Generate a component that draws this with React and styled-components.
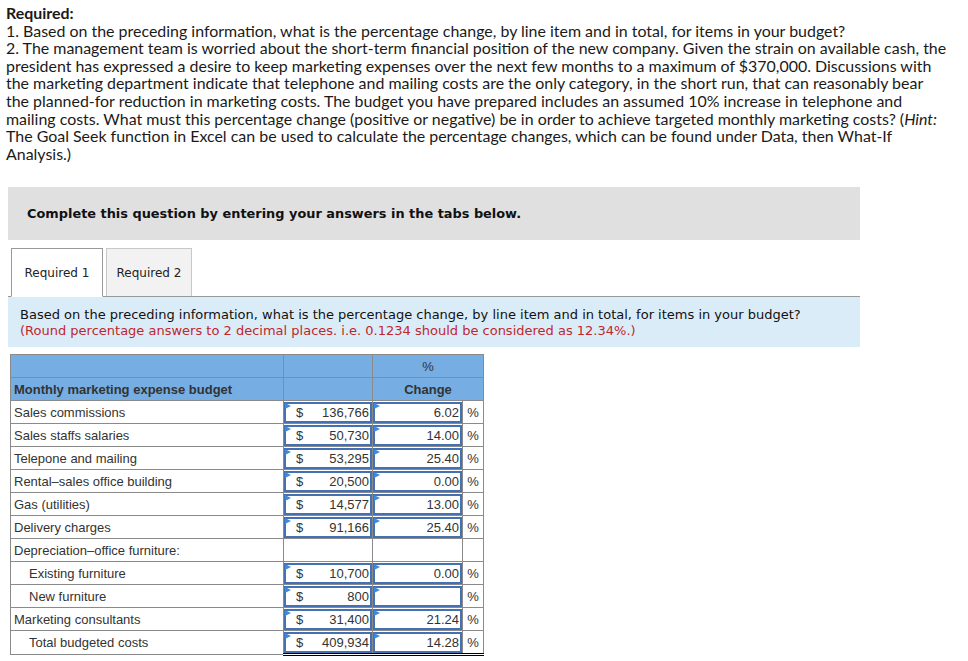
import React from "react";
import styled, { createGlobalStyle } from "styled-components";

const Global = createGlobalStyle`
  body {
    margin: 0;
    background: #fff;
  }
`;

const Page = styled.div`
  padding: 4px 8px 8px 8px;
  width: 968px;
  box-sizing: border-box;
`;

const Prompt = styled.div`
  font-family: Lato, "Open Sans", sans-serif;
  font-size: 15.95px;
  line-height: 17.6px;
  color: #1a1a1a;
  margin-left: -2px;
  white-space: nowrap;
  b { font-weight: 700; }
`;

const Banner = styled.div`
  margin-top: 25px;
  height: 53px;
  width: 852px;
  background: #e0e0e0;
  display: flex;
  align-items: center;
  padding-left: 19px;
  box-sizing: border-box;
  font-family: "DejaVu Sans", Verdana, sans-serif;
  font-weight: 700;
  font-size: 12.9px;
  color: #111;
`;

const Tabs = styled.div`
  display: flex;
  gap: 3px;
  margin-top: 9px;
  padding-left: 3px;
  width: 852px;
  box-sizing: border-box;
  border-bottom: 1px solid #999;
  height: 48px;
  align-items: flex-end;
`;

const Tab = styled.div`
  width: ${p => p.w}px;
  box-sizing: border-box;
  display: flex;
  align-items: center;
  justify-content: center;
  font-family: "DejaVu Sans", Verdana, sans-serif;
  font-size: 12px;
  color: #222;
  background: ${p => (p.active ? "#fff" : "#f2f2f2")};
  border: 1px solid ${p => (p.active ? "#999" : "#c8c8c8")};
  border-bottom: ${p => (p.active ? "1px solid #fff" : "none")};
  margin-bottom: ${p => (p.active ? "-1px" : "0")};
  height: ${p => (p.active ? 49 : 48)}px;
`;

const Info = styled.div`
  width: 852px;
  box-sizing: border-box;
  background: #dbecf9;
  padding: 10px 12px 8px 12px;
  font-family: "DejaVu Sans", Verdana, sans-serif;
  font-size: 13px;
  line-height: 16px;
  color: #111;
`;

const Red = styled.div`
  color: #c0272d;
`;

const Table = styled.table`
  margin-top: 7px;
  margin-left: 2px;
  border-collapse: collapse;
  font-family: "Liberation Sans", Arial, sans-serif;
  font-size: 13px;
  color: #333;
  table-layout: fixed;
`;

const Cell = styled.td`
  border: 1px solid #8a8a8a;
  height: 22px;
  padding: 0;
  background: ${p => (p.head ? "#76ade2" : "#fff")};
  font-weight: ${p => (p.bold ? 700 : 400)};
  font-size: 13px;
  text-align: ${p => p.align || "left"};
  padding-left: ${p => p.indent || 0}px;
  vertical-align: middle;
  ${p => p.topDark && "border-top: 1px solid #000;"}
  ${p => p.double && "border-bottom: 3px double #000;"}
`;

const Label = styled.span`
  padding-left: 3px;
`;

const Input = styled.div`
  position: relative;
  height: 21px;
  box-sizing: border-box;
  border: 2px solid #4571b3;
  display: flex;
  align-items: center;
  justify-content: ${p => (p.end ? "flex-end" : "space-between")};
  padding: 0 1px 0 10px;
  font-size: 13px;
  color: #333;
  &::before {
    content: "";
    position: absolute;
    left: -1px;
    top: -1px;
    border-top: 3px solid transparent;
    border-bottom: 3px solid transparent;
    border-left: 6px solid #3d8be0;
    width: 0;
    height: 0;
  }
`;

const Pct = styled.span`
  display: block;
  text-align: center;
`;

const rows = [
  { label: "Sales commissions", amt: "136,766", pct: "6.02" },
  { label: "Sales staffs salaries", amt: "50,730", pct: "14.00" },
  { label: "Telepone and mailing", amt: "53,295", pct: "25.40" },
  { label: "Rental\u2013sales office building", amt: "20,500", pct: "0.00" },
  { label: "Gas (utilities)", amt: "14,577", pct: "13.00" },
  { label: "Delivery charges", amt: "91,166", pct: "25.40" },
  { label: "Depreciation\u2013office furniture:", blank: true },
  { label: "Existing furniture", amt: "10,700", pct: "0.00", indent: 15 },
  { label: "New furniture", amt: "800", pct: "", indent: 15 },
  { label: "Marketing consultants", amt: "31,400", pct: "21.24" },
  { label: "Total budgeted costs", amt: "409,934", pct: "14.28", indent: 15, total: true },
];

export default function App() {
  return (
    <Page>
      <Global />
      <Prompt>
        <b>Required:</b>
        <br />
        1. Based on the preceding information, what is the percentage change, by line item and in total, for items in your budget?
        <br />
        2. The management team is worried about the short-term financial position of the new company. Given the strain on available cash, the
        <br />
        president has expressed a desire to keep marketing expenses over the next few months to a maximum of $370,000. Discussions with
        <br />
        the marketing department indicate that telephone and mailing costs are the only category, in the short run, that can reasonably bear
        <br />
        the planned-for reduction in marketing costs. The budget you have prepared includes an assumed 10% increase in telephone and
        <br />
        mailing costs. What must this percentage change (positive or negative) be in order to achieve targeted monthly marketing costs? (<i>Hint:</i>
        <br />
        The Goal Seek function in Excel can be used to calculate the percentage changes, which can be found under Data, then What-If
        <br />
        Analysis.)
      </Prompt>
      <Banner>Complete this question by entering your answers in the tabs below.</Banner>
      <Tabs>
        <Tab active w={92}>Required 1</Tab>
        <Tab w={86}>Required 2</Tab>
      </Tabs>
      <Info>
        Based on the preceding information, what is the percentage change, by line item and in total, for items in your budget?
        <Red>(Round percentage answers to 2 decimal places. i.e. 0.1234 should be considered as 12.34%.)</Red>
      </Info>
      <Table>
        <colgroup>
          <col style={{ width: 273 }} />
          <col style={{ width: 89 }} />
          <col style={{ width: 90 }} />
          <col style={{ width: 21 }} />
        </colgroup>
        <tbody>
          <tr>
            <Cell head />
            <Cell head />
            <Cell head colSpan={2} align="center">%</Cell>
          </tr>
          <tr>
            <Cell head bold><Label>Monthly marketing expense budget</Label></Cell>
            <Cell head />
            <Cell head bold colSpan={2} align="center">Change</Cell>
          </tr>
          {rows.map(r => (
            <tr key={r.label}>
              <Cell indent={r.indent}><Label>{r.label}</Label></Cell>
              {r.blank ? (
                <>
                  <Cell />
                  <Cell />
                  <Cell />
                </>
              ) : (
                <>
                  <Cell double={r.total}>
                    <Input><span>$</span><span>{r.amt}</span></Input>
                  </Cell>
                  <Cell double={r.total}>
                    <Input end>{r.pct}</Input>
                  </Cell>
                  <Cell double={r.total} topDark={r.total}><Pct>%</Pct></Cell>
                </>
              )}
            </tr>
          ))}
        </tbody>
      </Table>
    </Page>
  );
}
